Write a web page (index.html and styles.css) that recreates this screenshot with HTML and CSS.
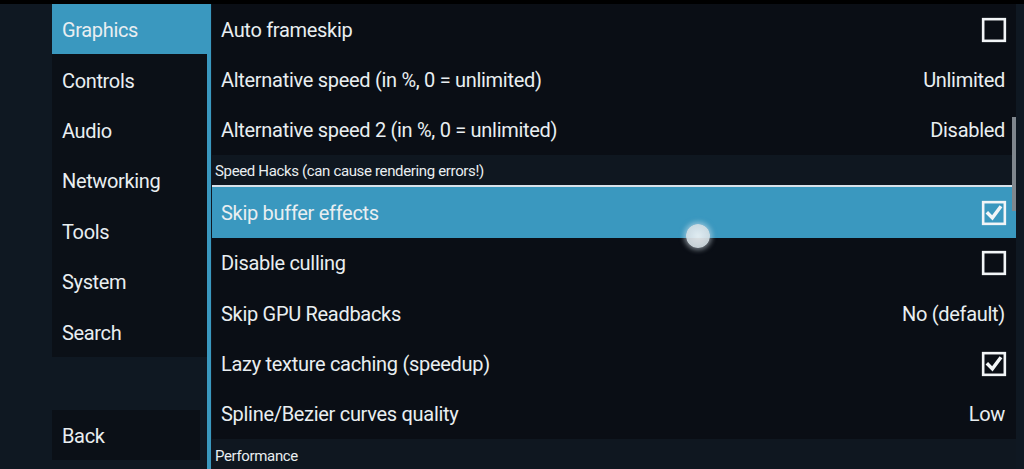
FILE: index.html
```html
<!DOCTYPE html>
<html lang="en">
<head>
    <meta charset="UTF-8">
    <meta name="viewport" content="width=device-width, initial-scale=1.0">
    <title>Settings</title>
    <link rel="stylesheet" href="styles.css">
</head>
<body>
    <div class="topbar"></div>

    <div class="screen">
        <!-- Tabs on the left -->
        <nav class="sidebar">
            <ul class="tabs">
                <li class="tab activ">Graphics</li>
                <li class="tab">Controls</li>
                <li class="tab">Audio</li>
                <li class="tab">Networking</li>
                <li class="tab">Tools</li>
                <li class="tab">System</li>
                <li class="tab">Search</li>
            </ul>
            <div class="back">Back</div>
        </nav>

        <div class="divider"></div>

        <!-- Settings list -->
        <div class="setari">
            <div class="rand">
                <span>Auto frameskip</span>
                <svg class="bifa" viewBox="0 0 24 24"><rect x="2" y="2" width="20" height="20"/></svg>
            </div>
            <div class="rand">
                <span>Alternative speed (in %, 0 = unlimited)</span>
                <span class="valoare">Unlimited</span>
            </div>
            <div class="rand">
                <span>Alternative speed 2 (in %, 0 = unlimited)</span>
                <span class="valoare">Disabled</span>
            </div>

            <div class="sectiune linie">Speed Hacks (can cause rendering errors!)</div>

            <div class="rand selectat">
                <span>Skip buffer effects</span>
                <svg class="bifa" viewBox="0 0 24 24"><rect x="2" y="2" width="20" height="20"/><path class="check" d="M6.5 12.5 L10.5 16.5 L17.5 7"/></svg>
            </div>
            <div class="rand">
                <span>Disable culling</span>
                <svg class="bifa" viewBox="0 0 24 24"><rect x="2" y="2" width="20" height="20"/></svg>
            </div>
            <div class="rand">
                <span>Skip GPU Readbacks</span>
                <span class="valoare">No (default)</span>
            </div>
            <div class="rand">
                <span>Lazy texture caching (speedup)</span>
                <svg class="bifa" viewBox="0 0 24 24"><rect x="2" y="2" width="20" height="20"/><path class="check" d="M6.5 12.5 L10.5 16.5 L17.5 7"/></svg>
            </div>
            <div class="rand">
                <span>Spline/Bezier curves quality</span>
                <span class="valoare">Low</span>
            </div>

            <div class="sectiune">Performance</div>

            <div class="scrollbar"></div>
        </div>
    </div>

    <!-- touch indicator -->
    <div class="atingere"></div>
</body>
</html>
```

FILE: styles.css
```css
body {
    margin: 0;
    background-color: #0f1822;
    font-family: Roboto, "Noto Sans", sans-serif;
    color: #e9eef1;
    overflow: hidden;
}

.topbar {
    height: 4px;
    background-color: #000;
}

.screen {
    display: flex;
    height: 465px;
}

.sidebar {
    display: flex;
    flex-direction: column;
    width: 155px;
    margin-left: 52px;
    padding-bottom: 9px;
}

.tabs {
    list-style: none;
    margin: 0;
    padding: 0;
}

.tab {
    height: 50.4px;
    display: flex;
    align-items: center;
    padding-left: 10px;
    padding-top: 2px;
    box-sizing: border-box;
    background-color: #0b1017;
    font-size: 20px;
    letter-spacing: -0.35px;
}

.tab.activ {
    background-color: #3a98bf;
}

.back {
    margin-top: auto;
    width: 148px;
    height: 50px;
    display: flex;
    align-items: center;
    padding-left: 10px;
    padding-top: 2px;
    box-sizing: border-box;
    background-color: #0b1017;
    font-size: 20px;
    letter-spacing: -0.35px;
}

.divider {
    width: 4px;
    background-color: #3a98bf;
}

.setari {
    position: relative;
    flex: 1;
    margin-right: 8px;
    margin-left: 1px;
}

.rand {
    height: 50.4px;
    display: flex;
    align-items: center;
    justify-content: space-between;
    padding: 1px 11px 0 9px;
    box-sizing: border-box;
    background-color: #0a0e15;
    font-size: 20px;
    letter-spacing: -0.3px;
}

.rand.selectat {
    background-color: #3a98bf;
}

.bifa {
    width: 26px;
    height: 26px;
    margin-right: -2px;
    fill: none;
    stroke: #f2f5f7;
    stroke-width: 2.4;
}

.bifa .check {
    stroke-width: 3.2;
    stroke-linecap: square;
}

.sectiune {
    height: 31px;
    display: flex;
    align-items: center;
    padding: 2px 0 0 3px;
    box-sizing: border-box;
    background-color: #0f1720;
    font-size: 15px;
    letter-spacing: -0.35px;
}

.sectiune.linie {
    height: 32px;
    border-bottom: 2px solid #d9e2ea;
}

.scrollbar {
    position: absolute;
    right: 0;
    top: 113px;
    width: 4px;
    height: 94px;
    background-color: #7f868d;
}

.atingere {
    position: absolute;
    left: 686px;
    top: 224px;
    width: 24px;
    height: 24px;
    border-radius: 50%;
    background: radial-gradient(circle, #eef3f6 0%, #d6e0e6 70%, #bccad2 100%);
    box-shadow: 0 0 5px 2px rgba(220, 232, 240, 0.55);
    opacity: 0.92;
}
```
